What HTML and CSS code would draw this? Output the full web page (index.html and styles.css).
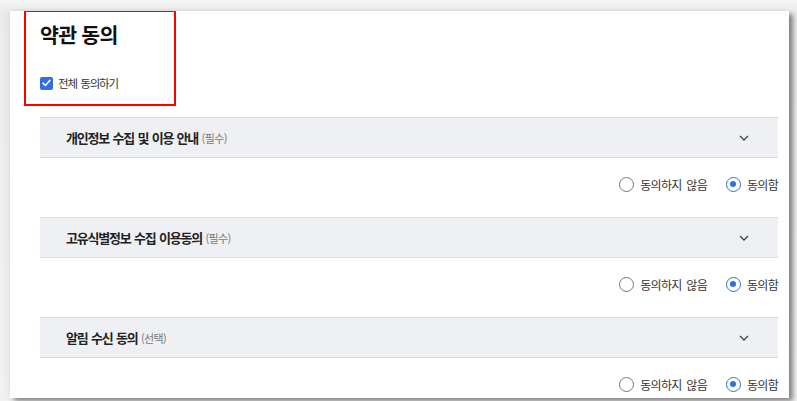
FILE: index.html
```html
<!DOCTYPE html>
<html lang="ko">
<head>
<meta charset="utf-8">
<title>약관 동의</title>
<link rel="stylesheet" href="styles.css">
</head>
<body>
<div class="card">
  <div class="intro">
    <h1 class="title">약관 동의</h1>
    <label class="all-check">
      <span class="checkbox"><svg width="9" height="8" viewBox="0 0 9 8"><path d="M1 4.2 L3.4 6.5 L8 1.3" fill="none" stroke="#fff" stroke-width="1.6" stroke-linecap="round" stroke-linejoin="round"/></svg></span>
      <span class="all-label">전체 동의하기</span>
    </label>
  </div>

  <section class="term">
    <div class="term-head">
      <span class="term-title">개인정보 수집 및 이용 안내 <small class="term-tag">(필수)</small></span>
      <svg class="chev" width="10" height="6" viewBox="0 0 10 6"><path d="M1 1 L5 5 L9 1" fill="none" stroke="#444" stroke-width="1.3"/></svg>
    </div>
    <div class="choices">
      <span class="choice"><span class="radio"></span>동의하지 않음</span>
      <span class="choice"><span class="radio on"></span>동의함</span>
    </div>
  </section>

  <section class="term">
    <div class="term-head">
      <span class="term-title">고유식별정보 수집 이용동의 <small class="term-tag">(필수)</small></span>
      <svg class="chev" width="10" height="6" viewBox="0 0 10 6"><path d="M1 1 L5 5 L9 1" fill="none" stroke="#444" stroke-width="1.3"/></svg>
    </div>
    <div class="choices">
      <span class="choice"><span class="radio"></span>동의하지 않음</span>
      <span class="choice"><span class="radio on"></span>동의함</span>
    </div>
  </section>

  <section class="term">
    <div class="term-head">
      <span class="term-title">알림 수신 동의 <small class="term-tag">(선택)</small></span>
      <svg class="chev" width="10" height="6" viewBox="0 0 10 6"><path d="M1 1 L5 5 L9 1" fill="none" stroke="#444" stroke-width="1.3"/></svg>
    </div>
    <div class="choices">
      <span class="choice"><span class="radio"></span>동의하지 않음</span>
      <span class="choice"><span class="radio on"></span>동의함</span>
    </div>
  </section>

  <div class="highlight"></div>
</div>
</body>
</html>
```

FILE: styles.css
```css
* { box-sizing: border-box; }

html, body {
  margin: 0;
  height: 100%;
}

body {
  background: linear-gradient(#f6f6f6, #ececec 11px, #f2f2f2);
  font-family: "Noto Sans CJK KR", "Noto Sans", sans-serif;
  color: #222;
  overflow: hidden;
  padding: 11px 8px 0 10px;
}

.card {
  position: relative;
  width: 779px;
  height: 387px;
  background: #fff;
  box-shadow: 4px 3px 5px rgba(0, 0, 0, 0.45), -2px 0 8px rgba(0, 0, 0, 0.06);
  padding: 0 11px 0 30px;
  overflow: hidden;
}

.intro {
  padding-top: 9px;
  height: 106px;
}

.title {
  margin: 0;
  font-size: 20.5px;
  line-height: 28px;
  font-weight: 700;
  color: #111;
  letter-spacing: -0.7px;
}

.all-check {
  display: flex;
  align-items: center;
  margin-top: 28px;
  gap: 5px;
}

.checkbox {
  width: 13px;
  height: 13px;
  border-radius: 2px;
  background: #2f6fe4;
  display: flex;
  align-items: center;
  justify-content: center;
}

.all-label {
  font-size: 11.5px;
  line-height: 14px;
  color: #333;
  letter-spacing: -1.2px;
  word-spacing: 1.5px;
}

.term {
  height: 100px;
}

.term-head {
  height: 41px;
  background: #eef0f4;
  border-top: 1px solid #d9dbe0;
  border-bottom: 1px solid #d9dbe0;
  display: flex;
  align-items: center;
  justify-content: space-between;
  padding: 0 29px 0 26px;
}

.term-title {
  font-size: 13px;
  font-weight: 700;
  color: #222;
  letter-spacing: -1.2px;
  word-spacing: 1px;
}

.term-tag {
  font-size: 11px;
  font-weight: 400;
  color: #777;
  letter-spacing: -0.6px;
}

.chev { display: block; }

.choices {
  display: flex;
  justify-content: flex-end;
  align-items: center;
  gap: 19px;
  margin-top: 16px;
  height: 20px;
}

.choice {
  display: flex;
  align-items: center;
  gap: 6px;
  font-size: 12px;
  color: #333;
  letter-spacing: -0.7px;
  word-spacing: 2px;
}

.radio {
  width: 15px;
  height: 15px;
  border-radius: 50%;
  border: 1px solid #777;
  background: #fff;
  position: relative;
}

.radio.on {
  border-color: #2f6fe4;
}

.radio.on::after {
  content: "";
  position: absolute;
  left: 3.5px;
  top: 3.5px;
  width: 6px;
  height: 6px;
  border-radius: 50%;
  background: #2f6fe4;
}

.highlight {
  position: absolute;
  left: 14px;
  top: -1px;
  width: 152px;
  height: 96px;
  border: 2px solid #ff0000;
  pointer-events: none;
}
```
